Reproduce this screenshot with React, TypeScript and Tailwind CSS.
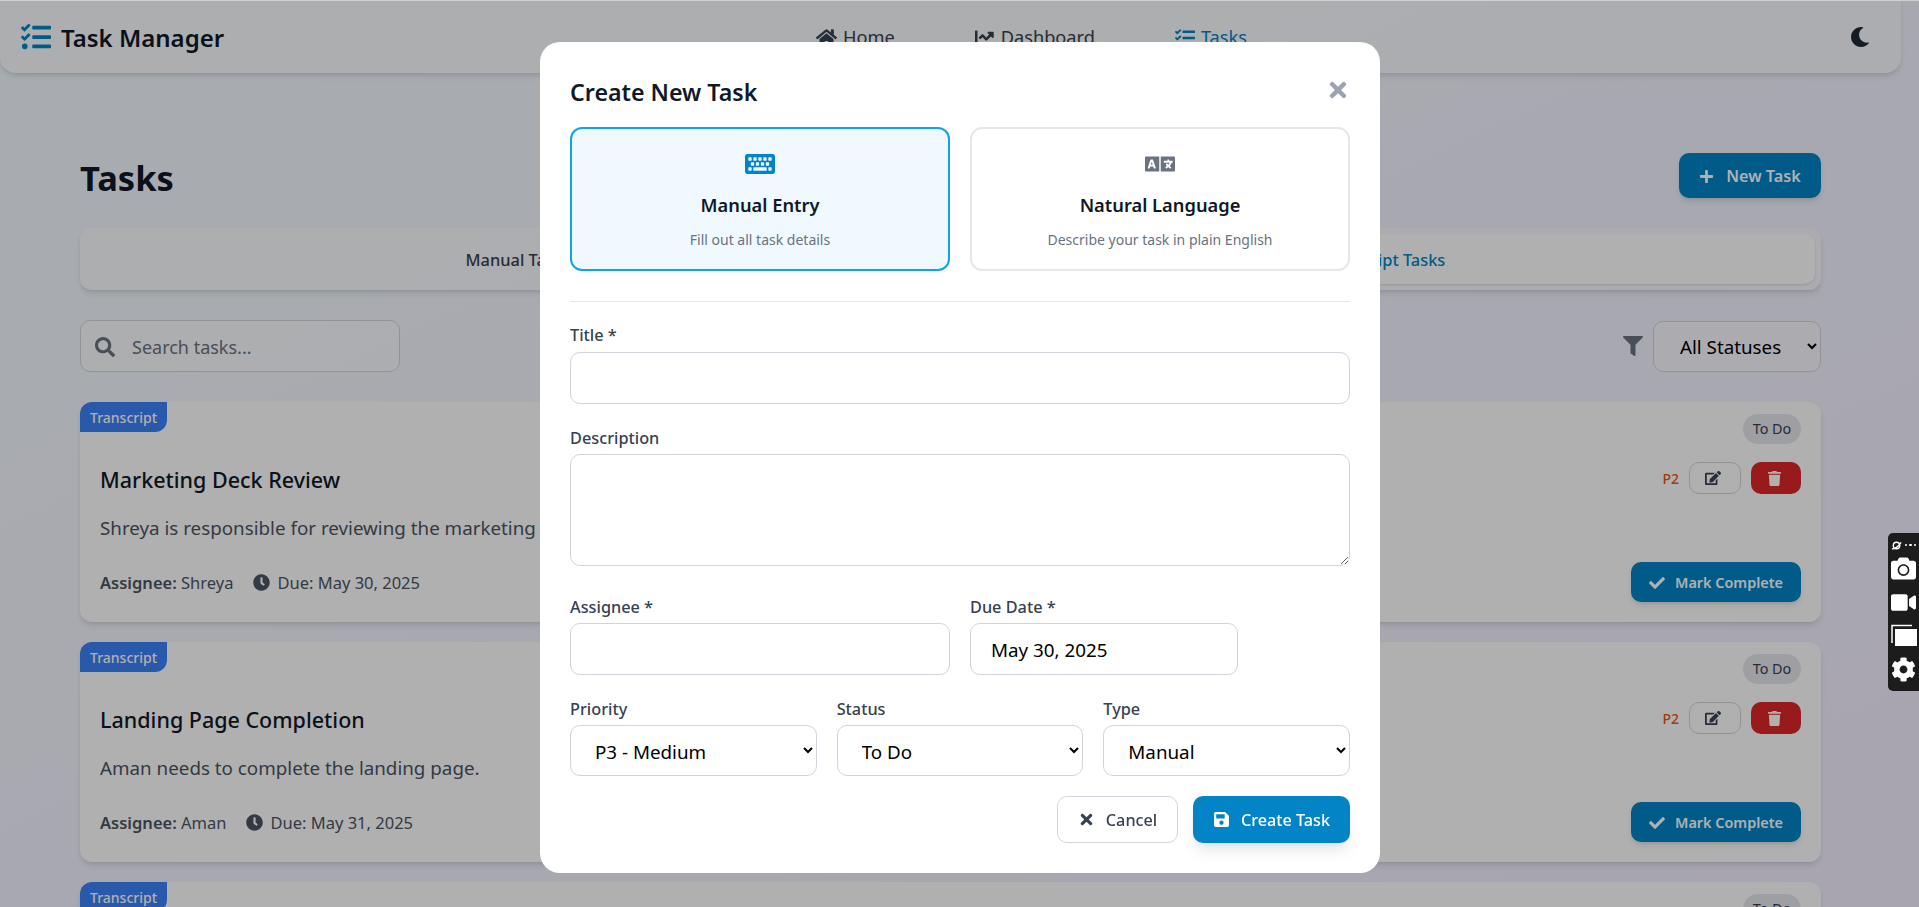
import React from 'react';
import {
  FaTasks,
  FaHome,
  FaChartLine,
  FaMoon,
  FaPlus,
  FaSearch,
  FaFilter,
  FaEdit,
  FaTrash,
  FaCheck,
  FaClock,
  FaTimes,
  FaKeyboard,
  FaLanguage,
  FaSave,
  FaCog,
  FaCamera,
  FaVideo,
} from 'react-icons/fa';

const TASKS = [
  {
    title: 'Marketing Deck Review',
    description: 'Shreya is responsible for reviewing the marketing deck by tonight.',
    assignee: 'Shreya',
    due: 'May 30, 2025',
  },
  {
    title: 'Landing Page Completion',
    description: 'Aman needs to complete the landing page.',
    assignee: 'Aman',
    due: 'May 31, 2025',
  },
  {
    title: 'Client Follow Up',
    description: 'Follow up with the client.',
    assignee: 'Shreya',
    due: 'Jun 1, 2025',
  },
];

const inputClass =
  'w-full rounded-[10px] border border-[#d1d5db] bg-white px-5 pt-[2px] text-[18.8px] text-black outline-none';
const labelClass = 'block text-[16.3px] font-medium leading-6 text-[#374151]';

const TaskCard = ({ task }: { task: (typeof TASKS)[number] }) => (
  <div className="relative h-[220px] shrink-0 rounded-xl bg-white shadow-md">
    <span className="absolute left-0 top-0 flex h-[30px] w-[87px] items-center justify-center rounded-tl-xl rounded-br-xl bg-[#3b82f6] text-[14px] font-medium text-white">
      Transcript
    </span>
    <span className="absolute right-5 top-3 flex h-[30px] w-[58px] items-center justify-center rounded-full bg-[#e5e7eb] text-[14.4px] text-[#374151]">
      To Do
    </span>
    <div className="flex h-full justify-between px-5 pb-5 pt-[60px]">
      <div className="flex flex-col">
        <h3 className="text-[21.5px] font-medium leading-9 text-[#111827]">{task.title}</h3>
        <p className="mt-[17px] text-[18.8px] leading-[26px] text-[#4b5563]">{task.description}</p>
        <div className="mt-[30px] flex items-center text-[16.5px] text-[#4b5563]">
          <span>
            <strong className="font-semibold">Assignee:</strong> {task.assignee}
          </span>
          <FaClock className="ml-5 mr-[7px] -translate-y-px text-[17px]" />
          <span>Due: {task.due}</span>
        </div>
      </div>
      <div className="flex flex-col items-end justify-between">
        <div className="flex items-center">
          <span className="mr-[10px] text-[14px] font-medium text-[#ea580c]">P2</span>
          <button className="mr-[10px] flex h-8 w-[52px] items-center justify-center rounded-[10px] border border-[#d1d5db] pr-1 text-[#374151]">
            <FaEdit className="text-[16px]" />
          </button>
          <button className="flex h-8 w-[50px] items-center justify-center rounded-[10px] bg-[#dc2626] pr-1 text-white">
            <FaTrash className="text-[15px]" />
          </button>
        </div>
        <button className="flex h-10 w-[170px] items-center justify-center gap-[10px] rounded-[10px] bg-[#0284c7] pt-px text-[14.4px] font-semibold text-white shadow-md">
          <FaCheck className="text-[16px]" /> Mark Complete
        </button>
      </div>
    </div>
  </div>
);

const App: React.FC = () => {
  return (
    <div className="relative h-[907px] w-full overflow-hidden bg-gradient-to-br from-[#f3fbff] to-[#f3efff] font-['Noto_Sans','Open_Sans',sans-serif]">
      <div className="pr-[18px] pt-px">
        <nav className="flex h-[72px] items-center justify-between rounded-b-2xl bg-white/60 pl-[21px] pr-[31px] shadow-md">
          <div className="flex w-[795px] items-center gap-[10px]">
            <FaTasks className="text-[30px] text-[#0284c7]" />
            <span className="translate-y-px text-[24px] font-semibold text-[#111827]">Task Manager</span>
          </div>
          <div className="flex flex-1 translate-y-px items-center gap-20 text-[18.2px] text-[#374151]">
            <a className="flex items-center gap-[6px]"><FaHome className="text-[21px]" /> Home</a>
            <a className="flex items-center gap-[6px]"><FaChartLine className="text-[20px]" /> Dashboard</a>
            <a className="flex items-center gap-[6px] text-[#0284c7]"><FaTasks className="text-[20px]" /> Tasks</a>
          </div>
          <FaMoon className="text-[20px] text-[#1f2937]" />
        </nav>

        <main className="flex flex-col px-20">
          <div className="mt-[80px] flex h-[45px] items-center justify-between">
            <h1 className="translate-y-[2px] text-[34.5px] font-bold text-[#111827]">Tasks</h1>
            <button className="flex h-[45px] w-[142px] items-center justify-center gap-3 rounded-[10px] bg-[#0284c7] pt-px text-[16.2px] font-semibold text-white shadow-md">
              <FaPlus className="text-[15px]" /> New Task
            </button>
          </div>

          <div className="mt-[30px] flex h-[62px] gap-0 rounded-xl bg-white/50 p-[6px] shadow-md">
            <button className="flex-1 rounded-[10px] pt-[2px] text-[16.4px] font-medium text-[#374151]">Manual Tasks</button>
            <button className="flex-1 rounded-[10px] bg-white pt-[2px] text-[16.4px] font-medium text-[#0284c7] shadow-sm">Transcript Tasks</button>
          </div>

          <div className="mt-[30px] flex h-[52px] items-center justify-between">
            <div className="relative w-80">
              <FaSearch className="absolute left-[15px] top-[17px] text-[20px] text-[#6b7280]" />
              <input
                placeholder="Search tasks..."
                className="h-[52px] w-full rounded-[10px] border border-[#d1d5db] bg-white/50 pl-[51px] pt-[2px] text-[18px] outline-none placeholder:text-[#6b7280]"
              />
            </div>
            <div className="flex items-center gap-[10px]">
              <FaFilter className="text-[20px] text-[#6b7280]" />
              <select className="h-[51px] w-[168px] rounded-[10px] border border-[#d1d5db] bg-white/50 pl-[22px] pt-[2px] text-[18.8px] text-black outline-none">
                <option>All Statuses</option>
              </select>
            </div>
          </div>

          <div className="mt-[30px] flex flex-col gap-5">
            {TASKS.map((task) => (
              <TaskCard key={task.title} task={task} />
            ))}
          </div>
        </main>
      </div>

      {/* dimmed backdrop + dialog */}
      <div className="fixed inset-0 bg-black/[0.31]">
        <div className="absolute inset-x-0 top-0 h-px bg-[#cdd0cf]" />
        <div className="absolute left-[540px] top-[42px] h-[831px] w-[840px] rounded-[20px] bg-white px-[30px] pt-[30px]">
          <div className="flex h-[38px] items-center justify-between">
            <h2 className="translate-y-px text-[23.2px] font-semibold text-[#111827]">Create New Task</h2>
            <FaTimes className="-translate-y-px text-[24px] text-[#9ca3af]" />
          </div>

          <div className="mt-[17px] grid grid-cols-2 gap-5">
            <div className="flex h-[144px] flex-col items-center rounded-xl border-2 border-[#0ea5e9] bg-[#f0f9ff] pt-[20px]">
              <FaKeyboard className="text-[30px] text-[#0284c7]" />
              <span className="mt-[12px] text-[18.3px] font-semibold leading-7 text-[#111827]">Manual Entry</span>
              <span className="mt-[10px] text-[14px] text-[#6b7280]">Fill out all task details</span>
            </div>
            <div className="flex h-[144px] flex-col items-center rounded-xl border-2 border-[#e5e7eb] bg-white pt-[20px]">
              <FaLanguage className="text-[30px] text-[#6b7280]" />
              <span className="mt-[12px] text-[18.3px] font-semibold leading-7 text-[#111827]">Natural Language</span>
              <span className="mt-[10px] text-[14px] text-[#6b7280]">Describe your task in plain English</span>
            </div>
          </div>

          <div className="mt-[30px] h-px bg-[#e5e7eb]" />

          <label className={`${labelClass} mt-[21px]`}>Title *</label>
          <input className={`${inputClass} mt-[5px] h-[52px]`} />

          <label className={`${labelClass} mt-[22px]`}>Description</label>
          <textarea className={`${inputClass} mt-[4px] block h-[112px]`} />

          <div className="mt-[29px] grid grid-cols-2 gap-5">
            <div>
              <label className={labelClass}>Assignee *</label>
              <input className={`${inputClass} mt-[4px] h-[52px]`} />
            </div>
            <div>
              <label className={labelClass}>Due Date *</label>
              <input defaultValue="May 30, 2025" className={`${inputClass} mt-[4px] h-[52px] !w-[268px]`} />
            </div>
          </div>

          <div className="mt-[22px] grid grid-cols-3 gap-5">
            <div>
              <label className={labelClass}>Priority</label>
              <select className={`${inputClass} mt-[4px] h-[51px]`}>
                <option>P3 - Medium</option>
              </select>
            </div>
            <div>
              <label className={labelClass}>Status</label>
              <select className={`${inputClass} mt-[4px] h-[51px]`}>
                <option>To Do</option>
              </select>
            </div>
            <div>
              <label className={labelClass}>Type</label>
              <select className={`${inputClass} mt-[4px] h-[51px]`}>
                <option>Manual</option>
              </select>
            </div>
          </div>

          <div className="mt-5 flex justify-end gap-[15px]">
            <button className="flex h-[47px] w-[121px] items-center justify-center gap-[11px] rounded-[10px] border border-[#d1d5db] bg-white pt-[2px] text-[16.2px] font-medium text-[#374151]">
              <FaTimes className="-translate-y-px text-[17px]" /> Cancel
            </button>
            <button className="flex h-[47px] w-[157px] items-center justify-center gap-[11px] rounded-[10px] bg-[#0284c7] pt-[2px] text-[16.2px] font-medium text-white shadow-lg">
              <FaSave className="-translate-y-px text-[17px]" /> Create Task
            </button>
          </div>
        </div>
      </div>

      {/* screen capture widget */}
      <div className="fixed left-[1888px] top-[533px] flex h-[158px] w-[31px] flex-col items-center rounded-l-[5px] bg-[#1c1c1c] pt-[6px] text-white">
        <div className="flex h-3 items-center gap-[3px] text-[10px] leading-none">
          <svg viewBox="0 0 12 12" className="size-[11px]" fill="none" stroke="white" strokeWidth="1.500">
            <circle cx="6" cy="6" r="3.500" />
            <path d="M1 9.500c2 1 7-2 10-7" />
          </svg>
          <span className="flex gap-[2px]">
            <span className="size-[2.500px] rounded-full bg-white" />
            <span className="size-[2.500px] rounded-full bg-white" />
            <span className="size-[2.500px] rounded-full bg-white" />
          </span>
        </div>
        <FaCamera className="mt-[5px] text-[25px]" />
        <FaVideo className="mt-[9px] text-[25px]" />
        <svg viewBox="0 0 26 22" className="mt-[9px] h-[22px] w-[26px]" fill="none">
          <path d="M1 19V1.500h20" stroke="white" strokeWidth="1.500" />
          <rect x="4" y="5" width="22" height="17" fill="white" />
        </svg>
        <FaCog className="mt-[11px] text-[25px]" />
      </div>
    </div>
  );
};

export default App;
